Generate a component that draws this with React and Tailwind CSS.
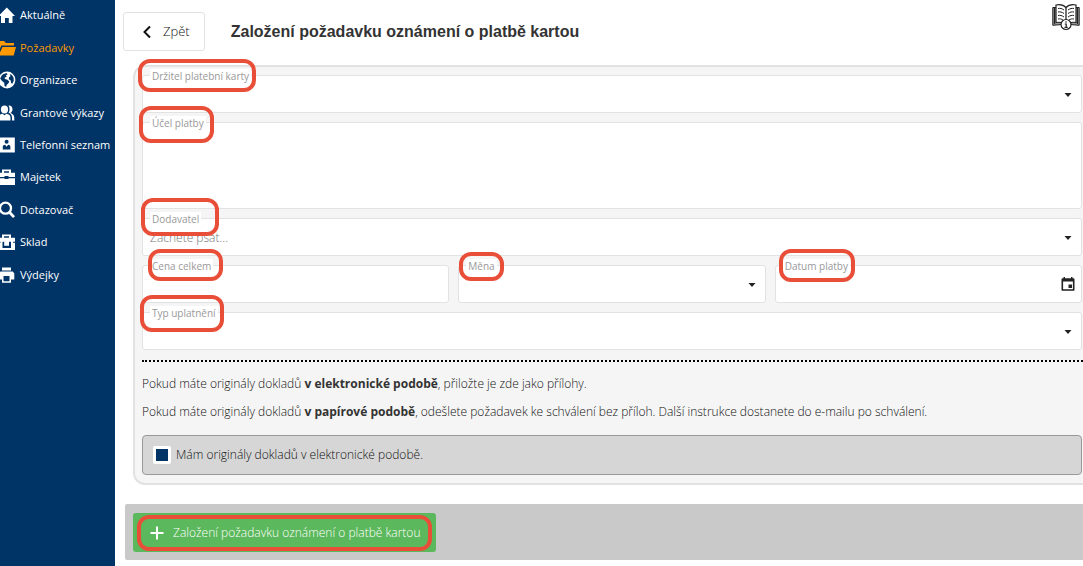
import React from "react";

const OUTLINE = "pointer-events-none absolute z-10 rounded-xl border-4 border-[#e84e38]";

function Glyph({ children }) {
  return (
    <svg viewBox="0 0 16 18" className="h-[18px] w-4 shrink-0" fill="currentColor" aria-hidden="true">
      {children}
    </svg>
  );
}

const NAV = [
  { label: "Aktuálně", icon: <path d="M-1.500 10 6.800 1.500l8.200 8.500h-2.500v7H8.800v-5H5v5H1V10z" /> },
  {
    label: "Požadavky",
    active: true,
    icon: <path d="M-2 2h6l2 2h8v2.600H1.400L-2 13.500zM2.500 8H16l-2.300 8.500H-1.600z" />,
  },
  {
    label: "Organizace",
    icon: (
      <>
        <circle cx="7" cy="9" r="8.400" />
        <path
          className="fill-[#003366]"
          d="M3 3.200 6.600 2l1 1.300-1.700 1.300.8 1.200-2 .8.200 1.300 2.600.8 1.800 1.800-1 2-1.500 1.200-.7 2.200-1.600-1.100-.3-3-2.400-2L.2 7.500 1.500 4.700zM9.700 3l2.200 1 1.600 2.500.3 3.300-1.500 3-1.200-.8-.4-2.500-1.900-1.300.2-2 1.500-1z"
        />
      </>
    ),
  },
  {
    label: "Grantové výkazy",
    icon: (
      <>
        <ellipse cx="4.500" cy="5.400" rx="3.600" ry="4" />
        <path d="M-2 16.500v-3c0-1.800 2-3.200 4.500-3.700l2 1.500 2-1.500c2.600.5 4 1.900 4 3.700v3zM8.500 1.600c2.300-.3 4 1.300 4 3.600 0 1.700-.9 3.100-2.200 3.800 2.400.7 4 2.300 4 4.500v3H12v-3c0-2.100-1.200-3.700-3.400-4.700 1.200-2 1.300-5.200-.1-7.200z" />
      </>
    ),
  },
  {
    label: "Telefonní seznam",
    icon: (
      <>
        <path d="M-1 1.500h15.800v15H-1z" />
        <circle cx="6.600" cy="5.800" r="2" className="fill-[#003366]" />
        <path className="fill-[#003366]" d="M2.800 13.500v-3c0-1 1-1.600 2.300-1.800l1.500 2 1.500-2c1.300.2 2.300.8 2.300 1.800v3z" />
      </>
    ),
  },
  {
    label: "Majetek",
    icon: (
      <path
        fillRule="evenodd"
        d="M2 1.500h9v3.300h4v4.300H8.500V8h-4v1.100H-1V4.800h3zM4 3.300v1.500h5V3.300zM-1 10.200h5.500v.8h4v-.8H15V17H-1z"
      />
    ),
  },
  {
    label: "Dotazovač",
    icon: (
      <>
        <circle cx="5.500" cy="7.200" r="5.500" fill="none" stroke="currentColor" strokeWidth="2.300" />
        <path d="m9.500 11.300 4.500 4.800" stroke="currentColor" strokeWidth="2.800" />
      </>
    ),
  },
  {
    label: "Sklad",
    icon: (
      <path
        fillRule="evenodd"
        d="M2 1.500h9v3.300h4v4H-1v-4h3zM4 3.300v1.500h5V3.300zM-1 9.800h1.500V8.800h2V15h8.500V8.800h2v1H15V17H-1zM4.200 8.800h4.800v3.900H4.200z"
      />
    ),
  },
  {
    label: "Výdejky",
    icon: (
      <path
        fillRule="evenodd"
        d="M2 1.500h9v3H2zM-1 7.500l1.500-2h12.300l1.500 2v6H11v3.300H2v-3.300h-3zM3.500 10v5.200h6V10z"
      />
    ),
  },
];

function Caret() {
  return (
    <svg
      viewBox="0 0 8 4"
      className="pointer-events-none absolute top-1/2 right-[10px] h-1 w-2 -translate-y-px text-[#222]"
      fill="currentColor"
      aria-hidden="true"
    >
      <path d="M.5 0h7L4 4z" />
    </svg>
  );
}

const BOX =
  "block w-full appearance-none rounded-[3px] border border-[#e2e2e2] bg-white px-[7px] text-[12px] font-light text-[#333] outline-none placeholder:text-[#777]";

function Field({ id, label, outline, children }) {
  return (
    <div className="relative min-w-0">
      {children}
      <label
        htmlFor={id}
        className="absolute -top-[6px] left-2 bg-white px-[2px] text-[10px] leading-[14px] whitespace-nowrap text-[#999]"
      >
        {label}
      </label>
      <span className={`${OUTLINE} ${outline}`} />
    </div>
  );
}

function ManualIcon() {
  return (
    <svg viewBox="0 0 28 27" className="h-[27px] w-7" fill="none" stroke="#222" aria-hidden="true">
      <path d="M4 3.500H.8v17.800L10 20.500M24 3.500h3.200v17.800L18 20.500" fill="#999" />
      <path d="M2.500 3.500V20M25.500 3.500V20" />
      <path
        d="M14 3.500C11.500.8 7.500.3 4 1v17.500c4-.6 7.500-.2 10 2 2.500-2.200 6-2.600 10-2V1c-3.500-.7-7.500-.2-10 2.500z"
        fill="#fff"
        strokeWidth="1.200"
      />
      <path d="M14 3.500v15" strokeWidth="1.300" />
      <path d="M6 4.500c2-.4 4 0 6 1.500M6 8c2-.4 4 0 6 1.500M6 11.500c2-.4 4 0 6 1.500M6 15c2-.4 3.500 0 5 1M22 4.500c-2-.4-4 0-6 1.500M22 8c-2-.4-4 0-6 1.500M22 11.500c-2-.4-4 0-6 1.500M22 15c-2-.4-3.500 0-5 1" />
      <circle cx="14" cy="20.500" r="5" fill="#fff" strokeWidth="1.200" />
      <path d="M14 17.300v1.400M12.700 20h1.500v3.200M12.500 23.300h3.200" strokeWidth="1.200" />
    </svg>
  );
}

export default function App() {
  return (
    <div className="flex min-h-screen overflow-hidden bg-white font-['Open_Sans','Noto_Sans',sans-serif] text-[#333]">
      <nav className="w-[115px] shrink-0 bg-[#003366]">
        <ul className="flex min-h-[292px] flex-col">
          {NAV.map((item) => (
            <li key={item.label} className="flex flex-1">
              <a
                href="#"
                className={`flex flex-1 items-center gap-1 pb-[2px] text-[11px] leading-4 whitespace-nowrap ${
                  item.active ? "text-[#ff9900]" : "text-white"
                }`}
              >
                <Glyph>{item.icon}</Glyph>
                {item.label}
              </a>
            </li>
          ))}
        </ul>
      </nav>

      <main className="min-w-0 flex-1">
        <header className="flex items-start pt-3 pl-2">
          <button
            type="button"
            className="flex h-[39px] items-center gap-[9px] rounded-[3px] border border-[#e2e2e2] pr-[14px] pl-4 text-[13px] font-light text-[#111]"
          >
            <svg viewBox="0 0 14 14" className="h-[14px] w-[14px]" fill="none" stroke="currentColor" strokeWidth="2" aria-hidden="true">
              <path d="M10 1.500 4.500 7l5.500 5.500" />
            </svg>
            Zpět
          </button>
          <h1 className="flex-1 pt-2 pl-[26px] font-['Liberation_Sans',Arial,sans-serif] text-[16px] leading-6 font-bold">
            Založení požadavku oznámení o platbě kartou
          </h1>
          <a href="#" aria-label="Nápověda" className="-mt-2 pr-[3px]">
            <ManualIcon />
          </a>
        </header>

        <form>
          <section className="mt-[14px] ml-[18px] rounded-l-xl border-2 border-r-0 border-[#e2e2e2] bg-[#f5f5f5] pt-2 pb-2 pl-[7px]">
            <div className="flex flex-col gap-[9px] pr-px">
              <Field id="holder" label="Držitel platební karty" outline="-top-4 -left-1 h-[33px] w-[118px]">
                <select id="holder" className={`${BOX} h-[38px]`} />
                <Caret />
              </Field>
              <Field id="purpose" label="Účel platby" outline="-top-4 -left-[3px] h-[37px] w-[75px]">
                <textarea id="purpose" className={`${BOX} h-[87px] resize-none pt-3`} />
              </Field>
              <Field id="supplier" label="Dodavatel" outline="-top-5 -left-px h-[38px] w-[78px]">
                <input id="supplier" type="text" placeholder="Začněte psát..." className={`${BOX} h-[38px]`} />
                <Caret />
              </Field>
              <div className="grid grid-cols-3 gap-[9px]">
                <Field id="price" label="Cena celkem" outline="-top-4 left-[6px] h-[32px] w-[75px]">
                  <input id="price" type="text" className={`${BOX} h-[38px]`} />
                </Field>
                <Field id="currency" label="Měna" outline="-top-[13px] left-px h-[29px] w-[45px]">
                  <select id="currency" className={`${BOX} h-[38px]`} />
                  <Caret />
                </Field>
                <Field id="date" label="Datum platby" outline="-top-4 left-1 h-[33px] w-[76px]">
                  <input id="date" type="text" className={`${BOX} h-[38px]`} />
                  <svg viewBox="0 0 14 14" className="pointer-events-none absolute top-3 right-[7px] h-[14px] w-[14px]" aria-hidden="true">
                    <path
                      fill="#222"
                      fillRule="evenodd"
                      d="M2.500 0H4v1.200h6V0h1.500v1.200H12A1.300 1.300 0 0 1 13.500 2.400v10A1.300 1.300 0 0 1 12 13.800H2A1.300 1.300 0 0 1 .5 12.400v-10A1.300 1.300 0 0 1 2 1.200h.5zM2.100 4.500v7.800h9.800V4.500zM7.500 7.500H11V11H7.500z"
                    />
                  </svg>
                </Field>
              </div>
              <Field id="claim" label="Typ uplatnění" outline="-top-[17px] -left-[2px] h-[37px] w-[84px]">
                <select id="claim" className={`${BOX} h-[38px]`} />
                <Caret />
              </Field>
            </div>

            <hr className="mt-[10px] border-t-2 border-dotted border-black" />
            <p className="mt-3 text-[12px] leading-5 font-light text-[#111]">
              Pokud máte originály dokladů <strong className="font-bold text-[#333]">v elektronické podobě</strong>,
              přiložte je zde jako přílohy.
            </p>
            <p className="mt-2 text-[12px] leading-5 font-light text-[#111]">
              Pokud máte originály dokladů <strong className="font-bold text-[#333]">v papírové podobě</strong>, odešlete
              požadavek ke schválení bez příloh. Další instrukce dostanete do e-mailu po schválení.
            </p>
            <div className="mt-[13px] pr-px">
              <label className="flex h-10 items-center gap-[5px] rounded-[4px] border border-[#999] bg-[#d6d6d6] px-[10px] text-[12px] font-light text-[#111]">
                <input
                  type="checkbox"
                  defaultChecked
                  className="h-[18px] w-[18px] appearance-none rounded-[2px] border-[3px] border-white bg-white checked:bg-[#003366]"
                />
                Mám originály dokladů v elektronické podobě.
              </label>
            </div>
          </section>

          <div className="mt-[19px] ml-[10px] flex rounded-l-[2px] bg-[#c9c9c9] px-2 pt-[9px] pb-2">
            <button
              type="submit"
              className="relative flex h-[39px] items-center gap-2 rounded-[3px] bg-[#5cb85c] px-4 text-[12px] font-light whitespace-nowrap text-white"
            >
              <svg viewBox="0 0 16 16" className="h-4 w-4" fill="none" stroke="currentColor" strokeWidth="2" aria-hidden="true">
                <path d="M8 1.500v13M1.500 8h13" />
              </svg>
              Založení požadavku oznámení o platbě kartou
              <span className={`${OUTLINE} top-[2px] right-1 bottom-px left-1`} />
            </button>
          </div>
        </form>
      </main>
    </div>
  );
}
